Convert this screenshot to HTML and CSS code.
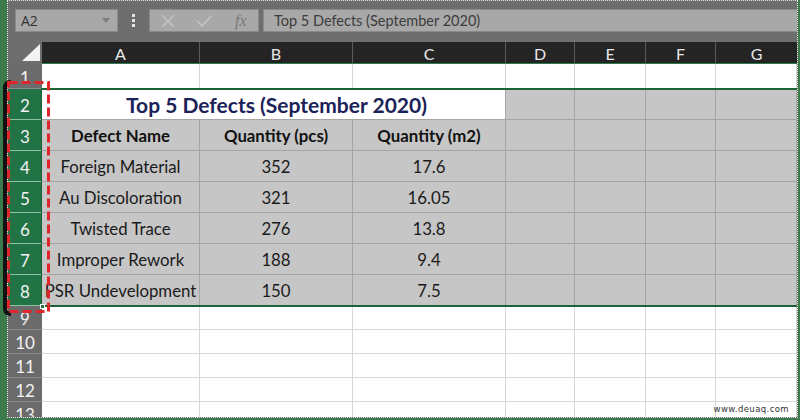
FILE: index.html
```html
<!DOCTYPE html>
<html>
<head>
<meta charset="utf-8">
<link rel="stylesheet" href="styles.css">
</head>
<body>
<div class="app">
  <div class="toolbar">
    <div class="namebox"><span class="ref">A2</span><svg class="caret" width="8" height="5" viewBox="0 0 8 5"><path d="M0 0 L8 0 L4 5 Z" fill="#7c7c7c"/></svg></div>
    <svg class="vdots" width="4" height="14" viewBox="0 0 4 14"><rect x="0" y="0" width="3" height="3" fill="#e6e6e6"/><rect x="0" y="5" width="3" height="3" fill="#e6e6e6"/><rect x="0" y="10" width="3" height="3" fill="#e6e6e6"/></svg>
    <div class="fbtns">
      <svg width="14" height="14" viewBox="0 0 14 14"><path d="M1 1 L13 13 M13 1 L1 13" stroke="#c2c2c2" stroke-width="1.6" fill="none"/></svg>
      <svg width="16" height="14" viewBox="0 0 16 14"><path d="M1 7 L6 12 L15 2" stroke="#c2c2c2" stroke-width="1.8" fill="none"/></svg>
      <span class="fx">fx</span>
    </div>
    <div class="finput">Top 5 Defects (September 2020)</div>
  </div>
  <div class="sheet">
    <div class="grid">
      <div class="corner"><svg width="18" height="17" viewBox="0 0 18 17"><path d="M18 0 L18 17 L0 17 Z" fill="#f2f2f2"/></svg></div>
      <div class="ch">A</div><div class="ch">B</div><div class="ch">C</div><div class="ch">D</div><div class="ch">E</div><div class="ch">F</div><div class="ch last">G</div>

      <div class="rh">1</div>
      <div class="c"></div><div class="c"></div><div class="c"></div><div class="c"></div><div class="c"></div><div class="c"></div><div class="c"></div>

      <div class="rh sel">2</div>
      <div class="c title">Top 5 Defects (September 2020)</div><div class="c s"></div><div class="c s"></div><div class="c s"></div><div class="c s"></div>

      <div class="rh sel">3</div>
      <div class="c s b">Defect Name</div><div class="c s b">Quantity (pcs)</div><div class="c s b">Quantity (m2)</div><div class="c s"></div><div class="c s"></div><div class="c s"></div><div class="c s"></div>

      <div class="rh sel">4</div>
      <div class="c s">Foreign Material</div><div class="c s">352</div><div class="c s">17.6</div><div class="c s"></div><div class="c s"></div><div class="c s"></div><div class="c s"></div>

      <div class="rh sel">5</div>
      <div class="c s">Au Discoloration</div><div class="c s">321</div><div class="c s">16.05</div><div class="c s"></div><div class="c s"></div><div class="c s"></div><div class="c s"></div>

      <div class="rh sel">6</div>
      <div class="c s">Twisted Trace</div><div class="c s">276</div><div class="c s">13.8</div><div class="c s"></div><div class="c s"></div><div class="c s"></div><div class="c s"></div>

      <div class="rh sel">7</div>
      <div class="c s">Improper Rework</div><div class="c s">188</div><div class="c s">9.4</div><div class="c s"></div><div class="c s"></div><div class="c s"></div><div class="c s"></div>

      <div class="rh sel">8</div>
      <div class="c s">PSR Undevelopment</div><div class="c s">150</div><div class="c s">7.5</div><div class="c s"></div><div class="c s"></div><div class="c s"></div><div class="c s"></div>

      <div class="rh">9</div>
      <div class="c"></div><div class="c"></div><div class="c"></div><div class="c"></div><div class="c"></div><div class="c"></div><div class="c"></div>
      <div class="rh">10</div>
      <div class="c"></div><div class="c"></div><div class="c"></div><div class="c"></div><div class="c"></div><div class="c"></div><div class="c"></div>
      <div class="rh">11</div>
      <div class="c"></div><div class="c"></div><div class="c"></div><div class="c"></div><div class="c"></div><div class="c"></div><div class="c"></div>
      <div class="rh">12</div>
      <div class="c"></div><div class="c"></div><div class="c"></div><div class="c"></div><div class="c"></div><div class="c"></div><div class="c"></div>
      <div class="rh">13</div>
      <div class="c"></div><div class="c"></div><div class="c"></div><div class="c"></div><div class="c"></div><div class="c"></div><div class="c"></div>
    </div>
    <div class="selection"></div>
    <div class="handle"></div>
  </div>
  <div class="watermark">www.deuaq.com</div>
</div>
<svg class="marks" width="60" height="250" viewBox="0 0 60 250">
  <path d="M11 2 Q5 2 5 8 L5 228 Q5 234 11 234" stroke="#111" stroke-width="4" fill="none"/>
  <rect x="8.5" y="2.5" width="40" height="229" stroke="#e0262b" stroke-width="3" stroke-dasharray="9 4" fill="none"/>
</svg>
</body>
</html>
```

FILE: styles.css
```css
* { box-sizing: border-box; }
html, body { margin: 0; }
body {
  width: 800px;
  height: 420px;
  overflow: hidden;
  background: #3d7a4b;
  padding: 0 2px 2px 7px;
  position: relative;
  font-family: "Lato", "Liberation Sans", sans-serif;
}
.app {
  position: relative;
  height: 418px;
  border: 1px dotted #dfe9df;
  background: #6e6e6e;
  overflow: hidden;
}
.toolbar {
  height: 41px;
  display: flex;
  align-items: flex-start;
  padding: 8px 0 0 7px;
  background: #6e6e6e;
}
.namebox {
  width: 103px;
  height: 23px;
  background: #a8a8a8;
  border: 1px solid #8a8a8a;
  display: flex;
  align-items: center;
  justify-content: space-between;
  padding: 0 7px 0 5px;
}
.ref { font-size: 14px; color: #333; font-family: "Open Sans", sans-serif; }
.vdots { margin: 5px 0 0 14px; }
.fbtns {
  margin-left: 13px;
  width: 110px;
  height: 23px;
  background: #a8a8a8;
  border: 1px solid #8a8a8a;
  display: flex;
  align-items: center;
  padding-left: 11px;
  gap: 21px;
}
.fx {
  font-family: "Liberation Serif", serif;
  font-style: italic;
  font-size: 16px;
  color: #7a7a7a;
  margin-left: 2px;
}
.finput {
  margin-left: 4px;
  flex: 1;
  height: 23px;
  background: #a8a8a8;
  border: 1px solid #8a8a8a;
  border-right: none;
  font-family: "Lato", sans-serif;
  font-size: 14.5px;
  color: #3c3c3c;
  padding-left: 10px;
  line-height: 21px;
  white-space: nowrap;
}
.sheet { position: relative; }
.grid {
  display: grid;
  grid-template-columns: 34px 158px 153px 153px 69px 71px 70px 1fr;
  grid-template-rows: 22px 25px repeat(7, 31px) repeat(5, 24px);
  background: #fff;
}
.corner {
  background: #6e6e6e;
  display: flex;
  align-items: flex-end;
  justify-content: flex-end;
  padding: 0 2px 2px 0;
  border-bottom: 1px solid #6e6e6e;
}
.ch {
  background: #242424;
  color: #e8e8e8;
  font-size: 16px;
  display: flex;
  align-items: center;
  justify-content: center;
  border-right: 1px solid #5a5a5a;
  border-bottom: 1px solid #2c7a4a;
  padding-top: 2px;
}
.ch.last { border-right: none; }
.rh {
  background: #6b6b6b;
  color: #f2f2f2;
  font-size: 17px;
  display: flex;
  align-items: center;
  justify-content: center;
  border-bottom: 1px solid #8a8a8a;
  padding-top: 2px;
}
.rh.sel {
  background: #217346;
  border-bottom: 1px solid #8fc0a0;
}
.c {
  border-right: 1px solid #d6d6d6;
  border-bottom: 1px solid #d6d6d6;
  display: flex;
  align-items: center;
  justify-content: center;
  white-space: nowrap;
  font-size: 16.8px;
  color: #1a1a1a;
  padding-top: 1px;
}
.c.s {
  background: #c6c6c6;
  border-right-color: #a5a5a5;
  border-bottom-color: #a5a5a5;
}
.c.b { font-weight: bold; color: #111; }
.c.title {
  grid-column: span 3;
  background: #fff;
  border-right-color: #a5a5a5;
  border-bottom-color: #a5a5a5;
  font-weight: bold;
  font-size: 21px;
  color: #1b2258;
  padding-left: 6px;
}
.selection {
  position: absolute;
  left: 33px;
  right: 0;
  top: 46px;
  height: 219px;
  border-top: 2px solid #1d6136;
  border-bottom: 2px solid #1d6136;
  border-left: 1px solid #1d6136;
  pointer-events: none;
}
.handle {
  position: absolute;
  left: 32px;
  top: 262px;
  width: 5px;
  height: 5px;
  background: #217346;
  border: 1px solid #fff;
}
.watermark {
  position: absolute;
  right: 8px;
  bottom: 3px;
  font-family: "DejaVu Sans", sans-serif;
  font-size: 8.5px;
  letter-spacing: 0.4px;
  color: #333;
}
.marks {
  position: absolute;
  left: 0;
  top: 80px;
}
```
